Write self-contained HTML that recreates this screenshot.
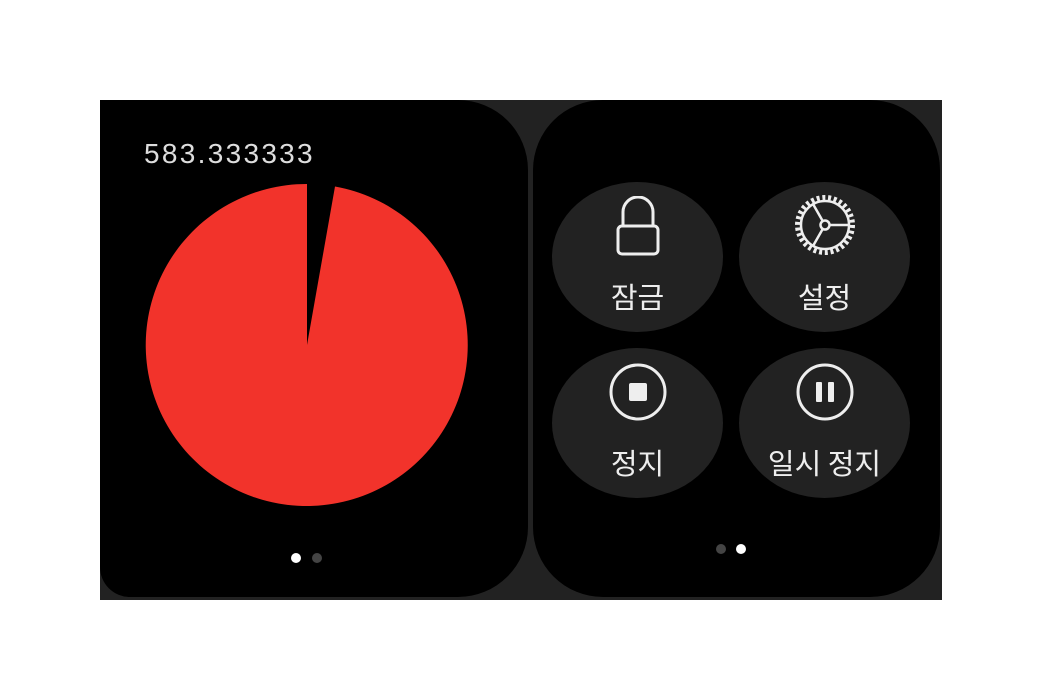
<!DOCTYPE html>
<html><head><meta charset="utf-8"><style>
body{margin:0;width:1042px;height:700px;background:#fff;position:relative;overflow:hidden;font-family:"Liberation Sans","Noto Sans CJK KR",sans-serif}
.p{position:absolute;top:100px;height:500px;background:#222}
.s{position:absolute;background:#000;border-radius:70px}
.b{position:absolute;width:171px;height:150px;border-radius:50%;background:#222;color:#eee;font-size:29px;text-align:center}
.b svg{position:absolute;left:50%;transform:translateX(-50%)}
.b span{position:absolute;left:0;right:0;top:93px;font-family:"Noto Sans CJK KR",sans-serif}
.d{position:absolute;width:10px;height:10px;border-radius:50%}
</style></head><body>
<div class="p" style="left:100px;width:431px"></div>
<div class="s" style="left:100px;top:100px;width:428px;height:497px;border-top-left-radius:0;border-bottom-left-radius:30px"></div>
<div class="p" style="left:531px;width:411px"></div>
<div class="s" style="left:533px;top:100px;width:407px;height:497px"></div>
<div style="position:absolute;left:144px;top:138px;color:#ddd;font-size:28px;letter-spacing:2.3px">583.333333</div>
<svg style="position:absolute;left:0;top:0" width="1042" height="700">
<path d="M307,345 L335,186.5 A161,161 0 1 1 307,184 Z" fill="#f2332b"/>
</svg>
<div class="d" style="left:291px;top:553px;background:#fff"></div>
<div class="d" style="left:312px;top:553px;background:#444"></div>
<div class="d" style="left:716px;top:544px;background:#444"></div>
<div class="d" style="left:736px;top:544px;background:#fff"></div>

<div class="b" style="left:552px;top:182px">
<svg style="top:14px" width="46" height="60" viewBox="0 0 46 60"><path d="M8,30 V16 A15,15 0 0 1 38,16 V30" fill="none" stroke="#eee" stroke-width="3"/><rect x="3" y="30" width="40" height="28" rx="4" fill="none" stroke="#eee" stroke-width="3"/></svg>
<span>잠금</span></div>
<div class="b" style="left:739px;top:182px">
<svg style="top:11px" width="64" height="64" viewBox="0 0 64 64"><circle cx="32" cy="32" r="27.5" fill="none" stroke="#eee" stroke-width="5" stroke-dasharray="3 2.76"/><circle cx="32" cy="32" r="24" fill="none" stroke="#eee" stroke-width="2.5"/><circle cx="32" cy="32" r="4.5" fill="none" stroke="#eee" stroke-width="2.5"/><path d="M36.5,32 H56 M29.7,36 L20,53 M29.7,28 L20,11" stroke="#eee" stroke-width="2.5"/></svg>
<span>설정</span></div>
<div class="b" style="left:552px;top:348px">
<svg style="top:14px" width="60" height="60" viewBox="0 0 60 60"><circle cx="30" cy="30" r="27" fill="none" stroke="#eee" stroke-width="3"/><rect x="21" y="21" width="18" height="18" rx="2" fill="#eee"/></svg>
<span>정지</span></div>
<div class="b" style="left:739px;top:348px">
<svg style="top:14px" width="60" height="60" viewBox="0 0 60 60"><circle cx="30" cy="30" r="27" fill="none" stroke="#eee" stroke-width="3"/><rect x="21" y="20" width="6" height="20" rx="1" fill="#eee"/><rect x="33" y="20" width="6" height="20" rx="1" fill="#eee"/></svg>
<span>일시 정지</span></div>
</body></html>
